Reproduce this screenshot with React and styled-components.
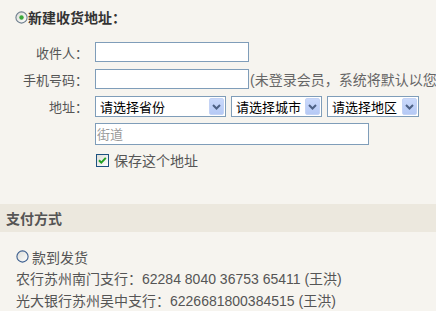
import styled, { createGlobalStyle } from "styled-components";

const GlobalStyle = createGlobalStyle`
  html, body {
    margin: 0;
    padding: 0;
    background: #f6f4ef;
    overflow: hidden;
  }
  body {
    font-family: "Liberation Sans", "Noto Sans CJK SC", sans-serif;
    color: #555;
  }
`;

function Radio({ checked }) {
  return (
    <RadioIcon width="13" height="13" viewBox="0 0 13 13">
      <defs>
        <linearGradient id={checked ? "rg1" : "rg0"} x1="0" y1="0" x2="1" y2="1">
          <stop offset="0" stopColor="#dcdcd6" />
          <stop offset="1" stopColor="#ffffff" />
        </linearGradient>
      </defs>
      <circle
        cx="6.5"
        cy="6.5"
        r="5.6"
        fill={`url(#${checked ? "rg1" : "rg0"})`}
        stroke={checked ? "#6f7f8f" : "#3d5f8f"}
        strokeWidth="1.1"
      />
      {checked && <circle cx="6.5" cy="6.5" r="2.2" fill="#3aa83a" />}
    </RadioIcon>
  );
}

function Checkbox() {
  return (
    <CheckIcon width="13" height="13" viewBox="0 0 13 13">
      <defs>
        <linearGradient id="cb" x1="0" y1="0" x2="1" y2="1">
          <stop offset="0" stopColor="#dcdcd6" />
          <stop offset="1" stopColor="#ffffff" />
        </linearGradient>
      </defs>
      <rect x="0.5" y="0.5" width="12" height="12" fill="url(#cb)" stroke="#1c5180" />
      <polyline
        points="3,6.3 5.3,8.6 9.8,3.9"
        fill="none"
        stroke="#21a121"
        strokeWidth="2"
      />
    </CheckIcon>
  );
}

function Select({ width, children }) {
  return (
    <SelectBox $width={width}>
      <SelectText>{children}</SelectText>
      <ArrowButton>
        <svg width="9" height="6" viewBox="0 0 9 6">
          <polyline points="1,1 4.5,4.5 8,1" fill="none" stroke="#4d6185" strokeWidth="2" />
        </svg>
      </ArrowButton>
    </SelectBox>
  );
}

export default function App() {
  return (
    <>
      <GlobalStyle />
      <Page>
        <Heading>
          <Radio checked />
          <span>新建收货地址：</span>
        </Heading>
        <FormGrid>
          <Label>收件人：</Label>
          <Field>
            <TextInput $width={154} />
          </Field>
          <Label>手机号码：</Label>
          <Field>
            <TextInput $width={154} />
            <Hint>(未登录会员，系统将默认以您的手机号码注册为会员)</Hint>
          </Field>
          <Label>地址：</Label>
          <Field $gap={5}>
            <Select width={131}>请选择省份</Select>
            <Select width={91}>请选择城市</Select>
            <Select width={92}>请选择地区</Select>
          </Field>
          <span />
          <Field>
            <StreetInput placeholder="街道" />
          </Field>
          <span />
          <CheckRow>
            <Checkbox />
            <span>保存这个地址</span>
          </CheckRow>
        </FormGrid>
        <Band>支付方式</Band>
        <PayList>
          <RadioRow>
            <Radio />
            <span>款到发货</span>
          </RadioRow>
          <PayLine>农行苏州南门支行：62284 8040 36753 65411 (王洪)</PayLine>
          <PayLine>光大银行苏州吴中支行：6226681800384515 (王洪)</PayLine>
        </PayList>
      </Page>
    </>
  );
}

const Page = styled.div`
  width: 436px;
  height: 311px;
  overflow: hidden;
`;

const Heading = styled.div`
  display: flex;
  align-items: center;
  margin: 8px 0 0 15px;
  height: 18px;
  font-size: 14px;
  font-weight: bold;
  color: #333;
`;

const RadioIcon = styled.svg`
  display: block;
  flex: none;
`;

const CheckIcon = styled.svg`
  display: block;
  flex: none;
`;

const FormGrid = styled.div`
  display: grid;
  grid-template-columns: 88px auto;
  column-gap: 7px;
  row-gap: 7px;
  margin-top: 16px;
  align-items: center;
`;

const Label = styled.div`
  text-align: right;
  font-size: 13px;
  color: #555;
  white-space: nowrap;
`;

const Field = styled.div`
  display: flex;
  align-items: center;
  gap: ${(p) => p.$gap || 0}px;
  white-space: nowrap;
`;

const TextInput = styled.input`
  box-sizing: border-box;
  width: ${(p) => p.$width}px;
  height: 20px;
  border: 1px solid #7f9db9;
  background: #fff;
  padding: 0 3px;
  margin: 0;
  flex: none;
`;

const Hint = styled.span`
  font-size: 14px;
  color: #666;
  margin-left: 1px;
`;

const SelectBox = styled.div`
  box-sizing: border-box;
  width: ${(p) => p.$width}px;
  height: 21px;
  border: 1px solid #7f9db9;
  background: #fff;
  display: flex;
  align-items: center;
  padding: 1px;
  flex: none;
`;

const SelectText = styled.span`
  flex: 1;
  font-size: 13px;
  color: #000;
  padding-left: 3px;
  overflow: hidden;
`;

const ArrowButton = styled.span`
  box-sizing: border-box;
  width: 15px;
  height: 17px;
  background: linear-gradient(#cad9fb, #b5c9f5);
  border: 1px solid #c4d3f5;
  border-radius: 2px;
  display: flex;
  align-items: center;
  justify-content: center;
`;

const StreetInput = styled.input`
  box-sizing: border-box;
  width: 274px;
  height: 22px;
  margin: -1px 0 0;
  border: 1px solid #7f9db9;
  background: #fff;
  padding: 0 1px;
  font-family: "Liberation Sans", "Noto Sans CJK SC", sans-serif;
  font-size: 13px;
  &::placeholder {
    color: #9a9a9a;
  }
`;

const CheckRow = styled.div`
  display: flex;
  align-items: center;
  gap: 5px;
  font-size: 14px;
  color: #555;
  margin-left: 1px;
  margin-top: -2px;
`;

const Band = styled.div`
  margin-top: 34px;
  height: 28px;
  background: #ece8de;
  display: flex;
  align-items: center;
  padding-left: 6px;
  font-size: 14px;
  font-weight: bold;
  color: #555;
`;

const PayList = styled.div`
  display: flex;
  flex-direction: column;
  padding: 14px 0 0 16px;
  font-size: 14px;
  color: #555;
`;

const RadioRow = styled.div`
  display: flex;
  align-items: center;
  gap: 3px;
  height: 21px;
  margin-bottom: 1px;
`;

const PayLine = styled.div`
  height: 22px;
  line-height: 22px;
  white-space: nowrap;
`;
